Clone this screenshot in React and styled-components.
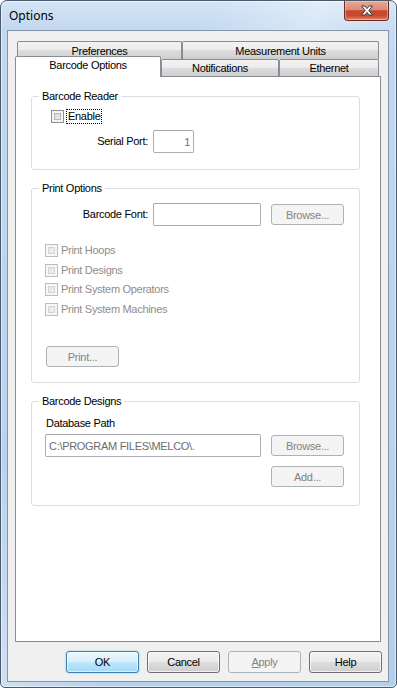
import React from 'react';
import styled, { createGlobalStyle, css } from 'styled-components';

const GlobalStyle = createGlobalStyle`
  html, body {
    margin: 0;
    padding: 0;
    background: #ffffff;
  }
  body {
    font-family: "Liberation Sans", Arial, sans-serif;
    font-size: 11px;
    letter-spacing: -0.3px;
    color: #000;
  }
  * {
    box-sizing: border-box;
  }
`;

const Window = styled.div`
  width: 397px;
  height: 688px;
  display: flex;
  flex-direction: column;
  border: 1px solid #4b5a6b;
  border-radius: 7px 7px 5px 5px;
  background:
    linear-gradient(115deg, rgba(255,255,255,0) 30%, rgba(255,255,255,0.35) 45%, rgba(255,255,255,0) 60%),
    linear-gradient(180deg, #d3e4f6 0%, #c2d8f0 30px, #b4cfec 100%);
  box-shadow: inset 0 0 0 1px rgba(255,255,255,0.55);
  overflow: hidden;
`;

const TitleBar = styled.div`
  height: 29px;
  flex: none;
  display: flex;
  align-items: flex-start;
  padding-left: 8px;
`;

const Title = styled.div`
  font-family: "Noto Sans", "Open Sans", sans-serif;
  font-size: 12px;
  letter-spacing: 0;
  line-height: 16px;
  margin-top: 7px;
  color: #000;
`;

const CloseButton = styled.div`
  margin-left: auto;
  margin-right: 7px;
  width: 45px;
  height: 20px;
  display: flex;
  align-items: center;
  justify-content: center;
  border: 1px solid #6b2c20;
  border-top: none;
  border-radius: 0 0 4px 4px;
  background: linear-gradient(180deg, #e9a797 0%, #dc8c77 45%, #c8462f 52%, #c94a31 78%, #e0896b 100%);
  box-shadow: inset 0 0 0 1px rgba(255, 220, 210, 0.45);
`;

const Client = styled.div`
  flex: 1;
  margin: 0 7px 5px 6px;
  display: flex;
  flex-direction: column;
  background: #f0f0f0;
  border: 1px solid #8695a5;
  padding: 10px 7px 8px 7px;
`;

const TabStrip = styled.div`
  display: flex;
  flex-direction: column;
  flex: none;
`;

const TabRow = styled.div`
  display: flex;
  margin: 0 2px;
  height: ${p => p.$height}px;
  align-items: flex-end;
`;

const Tab = styled.div`
  width: ${p => p.$width}px;
  height: ${p => p.$height}px;
  flex: none;
  display: flex;
  align-items: center;
  justify-content: center;
  border: 1px solid #898c95;
  border-bottom: none;
  border-radius: 2px 2px 0 0;
  background: linear-gradient(180deg, #f3f3f3 0%, #ebebeb 50%, #dddddd 50%, #cfcfcf 100%);
  white-space: nowrap;
  ${p => p.$selected && css`
    position: relative;
    z-index: 2;
    margin-left: -2px;
    margin-bottom: -1px;
    background: #ffffff;
    align-items: flex-start;
    padding-top: 2px;
  `}
`;

const Panel = styled.div`
  flex: 1;
  background: #ffffff;
  border: 1px solid #898c95;
  padding: 19px 20px 0 15px;
  display: flex;
  flex-direction: column;
  gap: 18px;
`;

const Group = styled.div`
  position: relative;
  border: 1px solid #d5dfe5;
  border-radius: 3px;
  padding: ${p => p.$pad};
  display: flex;
  flex-direction: column;
`;

const Legend = styled.span`
  position: absolute;
  top: -7px;
  left: 7px;
  padding: 0 3px;
  line-height: 13px;
  background: #ffffff;
`;

const Row = styled.div`
  display: flex;
  align-items: center;
  height: ${p => p.$height || 23}px;
  margin-top: ${p => p.$top || 0}px;
  padding-left: ${p => p.$indent || 0}px;
  padding-right: ${p => p.$right || 0}px;
  justify-content: ${p => (p.$end ? 'flex-end' : 'flex-start')};
  gap: ${p => p.$gap || 0}px;
`;

const FieldLabel = styled.span`
  width: 116px;
  flex: none;
  text-align: right;
  margin-right: 5px;
  line-height: 13px;
`;

const PlainLabel = styled.span`
  line-height: 13px;
  color: ${p => (p.$disabled ? '#8d8d8d' : '#000')};
`;

const TextBox = styled.div`
  width: ${p => p.$width}px;
  height: 23px;
  flex: none;
  display: flex;
  align-items: center;
  justify-content: ${p => (p.$right ? 'flex-end' : 'flex-start')};
  padding: 0 3px;
  border: 1px solid #abadb3;
  border-top-color: #a3a6ac;
  border-radius: 2px;
  background: #ffffff;
  color: ${p => p.$color || '#000'};
  white-space: nowrap;
`;

const Button = styled.div`
  width: 73px;
  height: ${p => p.$height || 21}px;
  flex: none;
  display: flex;
  align-items: center;
  justify-content: center;
  border: 1px solid #707070;
  border-radius: 3px;
  background: linear-gradient(180deg, #f2f2f2 0%, #ebebeb 50%, #dddddd 50%, #cfcfcf 100%);
  box-shadow: inset 0 0 0 1px rgba(255, 255, 255, 0.7);
  color: #000;
  ${p => p.$disabled && css`
    border-color: #adb2b5;
    background: #f4f4f4;
    box-shadow: none;
    color: #838383;
  `}
  ${p => p.$default && css`
    border-color: #3c7fb1;
    background: linear-gradient(180deg, #eaf6fd 0%, #d9f0fc 50%, #bee6fd 50%, #a7d9f5 100%);
    box-shadow: inset 0 0 0 1px rgba(255, 255, 255, 0.6), 0 0 2px #7fc8f0;
  `}
  u {
    text-decoration: underline;
  }
`;

const CheckBox = styled.span`
  width: 13px;
  height: 13px;
  flex: none;
  border: 1px solid #8f8f8f;
  background: linear-gradient(135deg, #cdd1d7 0%, #f4f4f4 100%);
  box-shadow: inset 0 0 0 2px #f4f4f4, inset 0 0 0 3px #b4b8be;
  ${p => p.$disabled && css`
    border-color: #bcbcbc;
    background: linear-gradient(135deg, #e2e2e2 0%, #f4f4f4 100%);
    box-shadow: inset 0 0 0 2px #f7f7f7, inset 0 0 0 3px #d4d4d4;
  `}
`;

const FocusText = styled.span`
  margin-left: 2px;
  padding: 0 1px;
  line-height: 13px;
  border: 1px dotted #000;
`;

const CheckRow = styled.div`
  display: flex;
  align-items: center;
  height: 19.5px;
  padding-left: 13px;
  gap: 3px;
`;

const CheckList = styled.div`
  display: flex;
  flex-direction: column;
  margin-top: 15px;
`;

const ButtonRow = styled.div`
  flex: none;
  display: flex;
  justify-content: flex-end;
  gap: 8px;
  margin: 9px -1px 0 0;
`;

function CloseGlyph() {
  return (
    <svg width="14" height="11" viewBox="0 0 14 11">
      <path
        d="M1.5 1 L5 1 L7 3.6 L9 1 L12.5 1 L8.8 5.5 L12.5 10 L9 10 L7 7.4 L5 10 L1.5 10 L5.2 5.5 Z"
        fill="#ffffff"
        stroke="#3a3a3a"
        strokeWidth="1"
        strokeLinejoin="round"
      />
    </svg>
  );
}

const printChecks = ['Print Hoops', 'Print Designs', 'Print System Operators', 'Print System Machines'];

export default function App() {
  return (
    <>
      <GlobalStyle />
      <Window>
        <TitleBar>
          <Title>Options</Title>
          <CloseButton>
            <CloseGlyph />
          </CloseButton>
        </TitleBar>
        <Client>
          <TabStrip>
            <TabRow $height={18}>
              <Tab $width={165} $height={18}>Preferences</Tab>
              <Tab $width={197} $height={18}>Measurement Units</Tab>
            </TabRow>
            <TabRow $height={17}>
              <Tab $width={146} $height={21} $selected>Barcode Options</Tab>
              <Tab $width={118} $height={17}>Notifications</Tab>
              <Tab $width={100} $height={17}>Ethernet</Tab>
            </TabRow>
          </TabStrip>
          <Panel>
            <Group $pad="12px 15px 16px 0">
              <Legend>Barcode Reader</Legend>
              <Row $height={15} $indent={19}>
                <CheckBox />
                <FocusText>Enable</FocusText>
              </Row>
              <Row $top={6}>
                <FieldLabel>Serial Port:</FieldLabel>
                <TextBox $width={41} $right $color="#6e6a8a">1</TextBox>
              </Row>
            </Group>

            <Group $pad="14px 15px 15px 0">
              <Legend>Print Options</Legend>
              <Row>
                <FieldLabel>Barcode Font:</FieldLabel>
                <TextBox $width={108} />
                <Button $disabled style={{ marginLeft: 10 }}>Browse...</Button>
              </Row>
              <CheckList>
                {printChecks.map(label => (
                  <CheckRow key={label}>
                    <CheckBox $disabled />
                    <PlainLabel $disabled>{label}</PlainLabel>
                  </CheckRow>
                ))}
              </CheckList>
              <Row $top={27} $height={21} $indent={14}>
                <Button $disabled>Print...</Button>
              </Row>
            </Group>

            <Group $pad="15px 15px 18px 0">
              <Legend>Barcode Designs</Legend>
              <Row $height={13} $indent={14}>
                <PlainLabel>Database Path</PlainLabel>
              </Row>
              <Row $top={4} $indent={13} $gap={10}>
                <TextBox $width={216} $color="#6d6d6d">C:\PROGRAM FILES\MELCO\.</TextBox>
                <Button $disabled>Browse...</Button>
              </Row>
              <Row $top={9} $height={21} $end>
                <Button $disabled>Add...</Button>
              </Row>
            </Group>
          </Panel>
          <ButtonRow>
            <Button $height={22} $default>OK</Button>
            <Button $height={22}>Cancel</Button>
            <Button $height={22} $disabled><u>A</u>pply</Button>
            <Button $height={22}>Help</Button>
          </ButtonRow>
        </Client>
      </Window>
    </>
  );
}
